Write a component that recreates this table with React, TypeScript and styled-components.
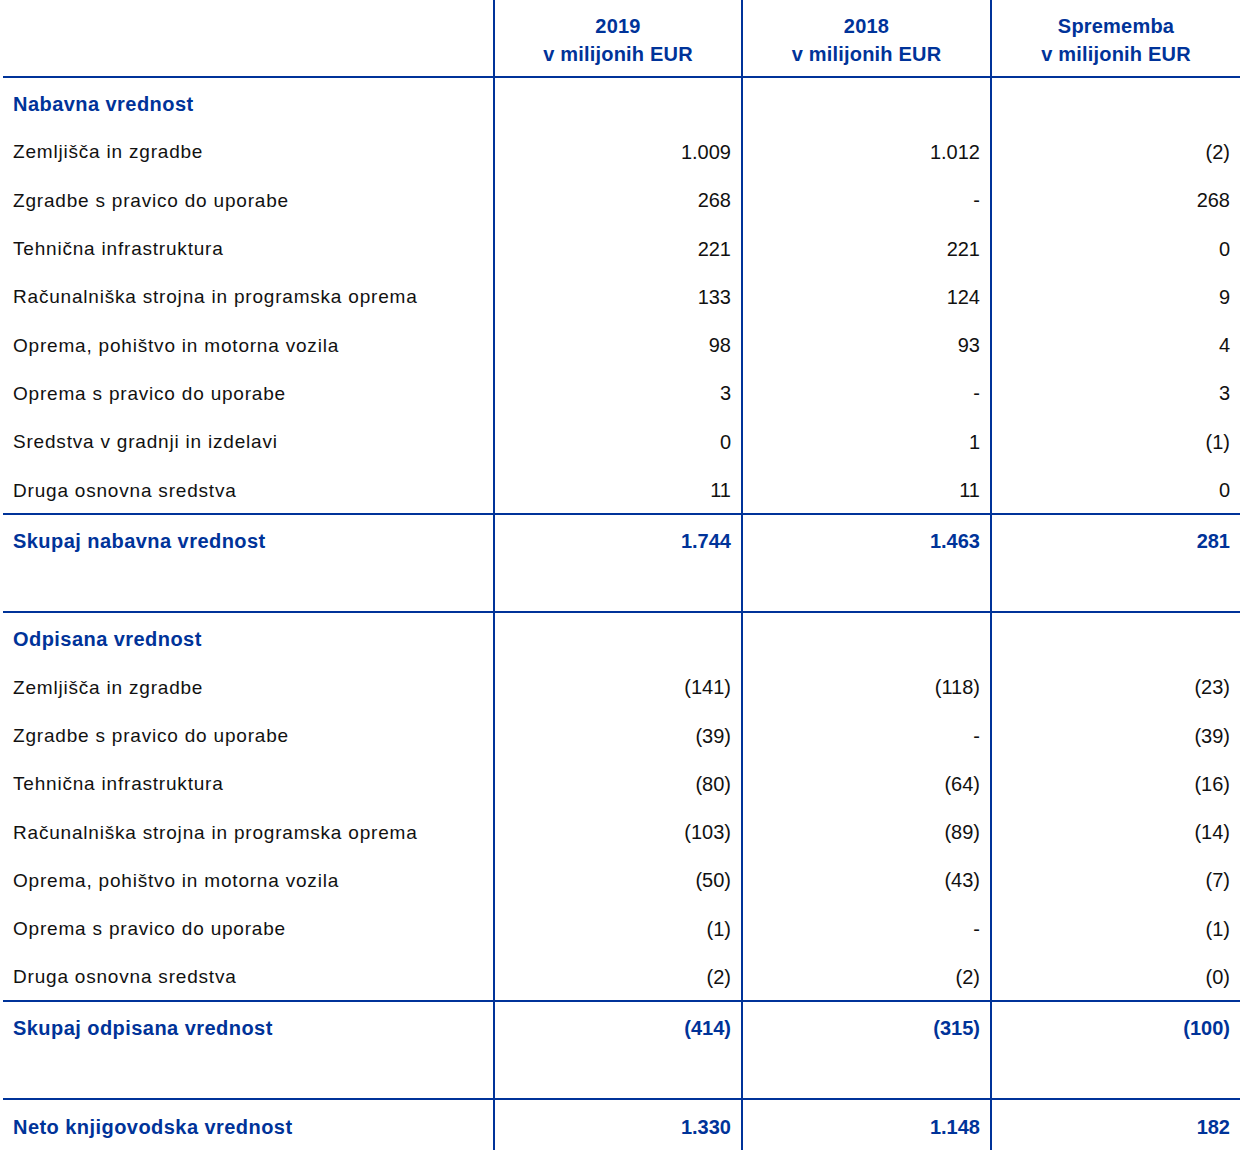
import React from "react";
import styled, { createGlobalStyle } from "styled-components";

const BLUE = "#003399";

const Global = createGlobalStyle`
  html, body { margin: 0; padding: 0; background: #fff; }
  body { font-family: "Liberation Sans", Arial, sans-serif; }
`;

const Table = styled.div`
  margin-left: 3px;
  width: 1237px;
  display: flex;
  flex-direction: column;
`;

const Row = styled.div<{ $h?: number; $top?: boolean; $bottom?: boolean }>`
  display: grid;
  grid-template-columns: 490px 248px 249px 250px;
  height: ${(p) => p.$h ?? 48.3}px;
  box-sizing: content-box;
  border-top: ${(p) => (p.$top ? `2px solid ${BLUE}` : "none")};
  border-bottom: ${(p) => (p.$bottom ? `2px solid ${BLUE}` : "none")};
`;

const Cell = styled.div<{ $num?: boolean; $bold?: boolean; $first?: boolean; $align?: "top" | "center" }>`
  box-sizing: border-box;
  display: flex;
  align-items: ${(p) => (p.$align === "top" ? "flex-start" : "center")};
  justify-content: ${(p) => (p.$num ? "flex-end" : "flex-start")};
  padding: ${(p) => (p.$align === "top" ? "15px" : "4px")} ${(p) => (p.$num ? "10px" : "0")} 0
    ${(p) => (p.$num ? "0" : "10px")};
  border-left: ${(p) => (p.$first ? "none" : `2px solid ${BLUE}`)};
  font-size: ${(p) => (p.$num || p.$bold ? "20px" : "19px")};
  letter-spacing: ${(p) => (p.$num ? "0" : p.$bold ? "0.45px" : "0.8px")};
  font-weight: ${(p) => (p.$bold ? 700 : 400)};
  color: ${(p) => (p.$bold ? BLUE : "#111")};
  white-space: nowrap;
`;

const HeadCell = styled.div<{ $first?: boolean }>`
  box-sizing: border-box;
  display: flex;
  flex-direction: column;
  align-items: center;
  padding-top: 12px;
  border-left: ${(p) => (p.$first ? "none" : `2px solid ${BLUE}`)};
  font-size: 20px;
  line-height: 28px;
  letter-spacing: 0.2px;
  font-weight: 700;
  color: ${BLUE};
`;

type Line = [string, string, string, string];

const sec1: Line[] = [
  ["Zemljišča in zgradbe", "1.009", "1.012", "(2)"],
  ["Zgradbe s pravico do uporabe", "268", "-", "268"],
  ["Tehnična infrastruktura", "221", "221", "0"],
  ["Računalniška strojna in programska oprema", "133", "124", "9"],
  ["Oprema, pohištvo in motorna vozila", "98", "93", "4"],
  ["Oprema s pravico do uporabe", "3", "-", "3"],
  ["Sredstva v gradnji in izdelavi", "0", "1", "(1)"],
  ["Druga osnovna sredstva", "11", "11", "0"],
];

const sec2: Line[] = [
  ["Zemljišča in zgradbe", "(141)", "(118)", "(23)"],
  ["Zgradbe s pravico do uporabe", "(39)", "-", "(39)"],
  ["Tehnična infrastruktura", "(80)", "(64)", "(16)"],
  ["Računalniška strojna in programska oprema", "(103)", "(89)", "(14)"],
  ["Oprema, pohištvo in motorna vozila", "(50)", "(43)", "(7)"],
  ["Oprema s pravico do uporabe", "(1)", "-", "(1)"],
  ["Druga osnovna sredstva", "(2)", "(2)", "(0)"],
];

const DataRow: React.FC<{ line: Line; bold?: boolean; top?: boolean; h?: number; align?: "top" | "center" }> = ({
  line,
  bold,
  top,
  h,
  align,
}) => (
  <Row $top={top} $h={h}>
    <Cell $first $bold={bold} $align={align}>
      {line[0]}
    </Cell>
    <Cell $num $bold={bold} $align={align}>
      {line[1]}
    </Cell>
    <Cell $num $bold={bold} $align={align}>
      {line[2]}
    </Cell>
    <Cell $num $bold={bold} $align={align}>
      {line[3]}
    </Cell>
  </Row>
);

export default function App() {
  return (
    <>
      <Global />
      <Table>
        <Row $h={76} $bottom>
          <HeadCell $first />
          <HeadCell>
            <span>2019</span>
            <span>v milijonih EUR</span>
          </HeadCell>
          <HeadCell>
            <span>2018</span>
            <span>v milijonih EUR</span>
          </HeadCell>
          <HeadCell>
            <span>Sprememba</span>
            <span>v milijonih EUR</span>
          </HeadCell>
        </Row>
        <DataRow line={["Nabavna vrednost", "", "", ""]} bold />
        {sec1.map((l, i) => (
          <DataRow key={"a" + i} line={l} />
        ))}
        <DataRow line={["Skupaj nabavna vrednost", "1.744", "1.463", "281"]} bold top h={96.6} align="top" />
        <DataRow line={["Odpisana vrednost", "", "", ""]} bold top />
        {sec2.map((l, i) => (
          <DataRow key={"b" + i} line={l} />
        ))}
        <DataRow line={["Skupaj odpisana vrednost", "(414)", "(315)", "(100)"]} bold top h={96.6} align="top" />
        <DataRow line={["Neto knjigovodska vrednost", "1.330", "1.148", "182"]} bold top h={50} />
      </Table>
    </>
  );
}
